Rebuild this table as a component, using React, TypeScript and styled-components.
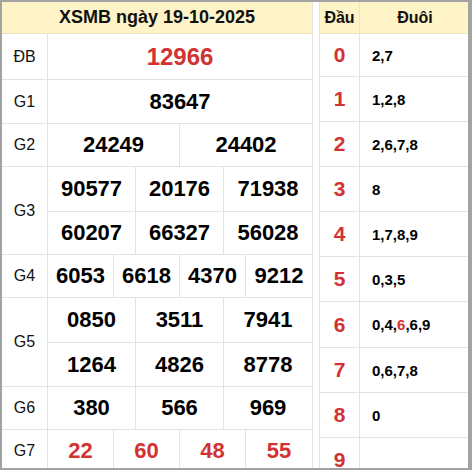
import React from "react";
import styled, { createGlobalStyle } from "styled-components";

const Global = createGlobalStyle`
  html, body { margin: 0; padding: 0; background: #fff; }
  body { font-family: "Liberation Sans", Arial, sans-serif; }
`;

const RED = "#d23232";
const LINE = "#e6e2dc";
const HEAD = "#fff3c8";

const Frame = styled.div`
  box-sizing: border-box;
  width: 472px;
  height: 470px;
  border: 2px solid #a3a3a3;
  border-right-width: 4px;
  overflow: hidden;
  display: flex;
  gap: 6px;
  background: #fff;
`;

const LeftTable = styled.div`
  width: 310px;
  flex: none;
  display: flex;
  flex-direction: column;
  border-right: 1px solid ${LINE};
`;

const RightTable = styled.div`
  width: 150px;
  flex: none;
  display: flex;
  flex-direction: column;
  border-left: 1px solid ${LINE};
  border-right: 1px solid ${LINE};
`;

const HeadRow = styled.div`
  height: 31px;
  flex: none;
  background: ${HEAD};
  border-bottom: 1px solid #efe3bd;
  display: flex;
  align-items: center;
  justify-content: center;
  font-weight: bold;
  font-size: 18px;
  color: #111;
`;

const RightHead = styled.div`
  height: 31px;
  flex: none;
  background: ${HEAD};
  border-bottom: 1px solid #efe3bd;
  display: grid;
  grid-template-columns: 40px 1fr;
  font-weight: bold;
  font-size: 16px;
  color: #111;
`;

const HeadCell = styled.div<{ $line?: boolean }>`
  display: flex;
  align-items: center;
  justify-content: center;
  ${(p) => (p.$line ? `border-right: 1px solid ${LINE};` : "")}
`;

const PrizeRow = styled.div`
  display: flex;
  flex: none;
  border-bottom: 1px solid ${LINE};
`;

const Label = styled.div`
  width: 45px;
  flex: none;
  border-right: 1px solid ${LINE};
  display: flex;
  align-items: center;
  justify-content: center;
  font-size: 16px;
  color: #111;
`;

const Body = styled.div`
  flex: 1;
  display: flex;
  flex-direction: column;
`;

const SubRow = styled.div<{ $cols: number; $h: number; $last?: boolean }>`
  height: ${(p) => p.$h}px;
  display: grid;
  grid-template-columns: repeat(${(p) => p.$cols}, 1fr);
  ${(p) => (p.$last ? "" : `border-bottom: 1px solid ${LINE};`)}
`;

const Num = styled.div<{ $red?: boolean; $big?: boolean }>`
  display: flex;
  align-items: center;
  justify-content: center;
  font-weight: bold;
  font-size: ${(p) => (p.$big ? 24 : 22)}px;
  color: ${(p) => (p.$red ? RED : "#000")};
  border-right: 1px solid ${LINE};
  &:last-child { border-right: none; }
`;

const LotoRow = styled.div<{ $h: number }>`
  height: ${(p) => p.$h}px;
  flex: none;
  display: grid;
  grid-template-columns: 40px 1fr;
  border-bottom: 1px solid ${LINE};
`;

const Head = styled.div`
  display: flex;
  align-items: center;
  justify-content: center;
  border-right: 1px solid ${LINE};
  font-weight: bold;
  font-size: 21px;
  color: ${RED};
`;

const Tail = styled.div`
  display: flex;
  align-items: center;
  padding-left: 12px;
  font-weight: bold;
  font-size: 15px;
  color: #000;
`;

const RedDigit = styled.span`
  color: ${RED};
`;

type Prize = { label: string; rows: string[][]; h: number[]; red?: boolean; big?: boolean };

const prizes: Prize[] = [
  { label: "ĐB", rows: [["12966"]], h: [45], red: true, big: true },
  { label: "G1", rows: [["83647"]], h: [43] },
  { label: "G2", rows: [["24249", "24402"]], h: [42] },
  { label: "G3", rows: [["90577", "20176", "71938"], ["60207", "66327", "56028"]], h: [44, 42] },
  { label: "G4", rows: [["6053", "6618", "4370", "9212"]], h: [42] },
  { label: "G5", rows: [["0850", "3511", "7941"], ["1264", "4826", "8778"]], h: [44, 43] },
  { label: "G6", rows: [["380", "566", "969"]], h: [42] },
  { label: "G7", rows: [["22", "60", "48", "55"]], h: [42], red: true },
];

const loto: { d: string; t: React.ReactNode; h: number }[] = [
  { d: "0", t: "2,7", h: 42 },
  { d: "1", t: "1,2,8", h: 44 },
  { d: "2", t: "2,6,7,8", h: 44 },
  { d: "3", t: "8", h: 44 },
  { d: "4", t: "1,7,8,9", h: 44 },
  { d: "5", t: "0,3,5", h: 44 },
  { d: "6", t: <>0,4,<RedDigit>6</RedDigit>,6,9</>, h: 45 },
  { d: "7", t: "0,6,7,8", h: 44 },
  { d: "8", t: "0", h: 44 },
  { d: "9", t: "", h: 44 },
];

export default function App() {
  return (
    <>
      <Global />
      <Frame>
        <LeftTable>
          <HeadRow>XSMB ngày 19-10-2025</HeadRow>
          {prizes.map((p) => (
            <PrizeRow key={p.label}>
              <Label>{p.label}</Label>
              <Body>
                {p.rows.map((r, i) => (
                  <SubRow key={i} $cols={r.length} $h={p.h[i]} $last={i === p.rows.length - 1}>
                    {r.map((n, j) => (
                      <Num key={j} $red={p.red} $big={p.big}>
                        {n}
                      </Num>
                    ))}
                  </SubRow>
                ))}
              </Body>
            </PrizeRow>
          ))}
        </LeftTable>
        <RightTable>
          <RightHead>
            <HeadCell $line>Đầu</HeadCell>
            <HeadCell>Đuôi</HeadCell>
          </RightHead>
          {loto.map((l) => (
            <LotoRow key={l.d} $h={l.h}>
              <Head>{l.d}</Head>
              <Tail>{l.t}</Tail>
            </LotoRow>
          ))}
        </RightTable>
      </Frame>
    </>
  );
}
